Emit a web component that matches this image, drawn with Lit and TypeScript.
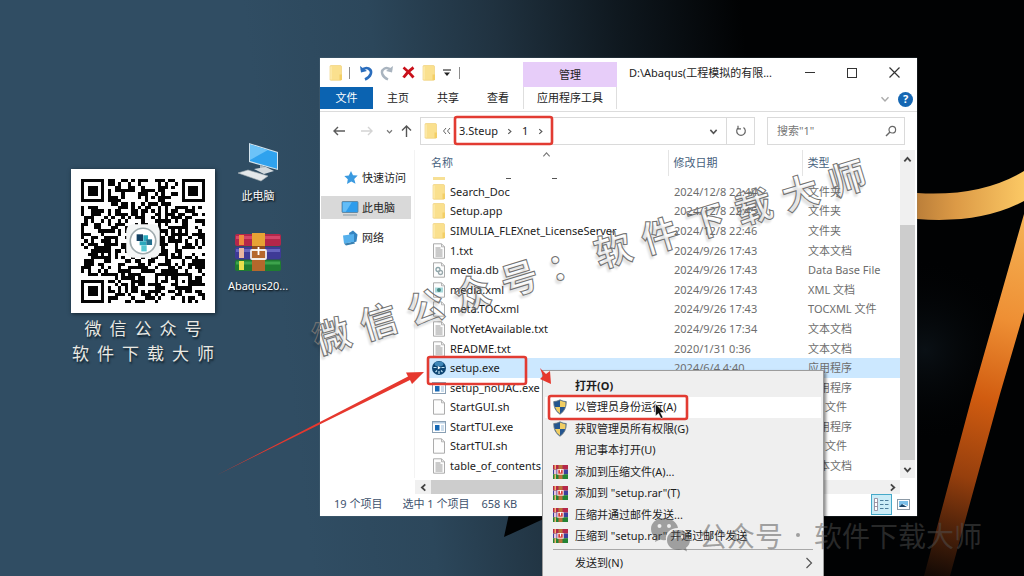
import { LitElement, html, svg, css } from "lit";
import { customElement } from "lit/decorators.js";
import { classMap } from "lit/directives/class-map.js";

const folder = html`<svg class="ic" width="14" height="16" viewBox="0 0 14 16">
  <path d="M1 1.500q0-1 1-1h9q1.500 0 1.500 1v13q0 .8-1 .8H2q-1 0-1-.8z" fill="#fae08e" stroke="#efcd70" stroke-width=".6" />
  <path d="M10.500 9.500h2.500v5.500h-2.500z" fill="#f3cf66" /><path d="M2 1.500v13" stroke="#fdedb5" stroke-width="1.200" />
</svg>`;

const sheet = (inner: unknown) => html`<svg class="ic" width="14" height="16" viewBox="0 0 14 16">
  <path d="M1.500.8h8l3 3v11.400h-11z" fill="#fdfdfd" stroke="#a3a3a3" stroke-width=".9" />
  <path d="M9.500.8v3h3" fill="none" stroke="#a3a3a3" stroke-width=".8" />${inner}
</svg>`;

const textFile = sheet(svg`<path d="M3.500 5h5M3.500 7h7M3.500 9h7M3.500 11h7M3.500 13h7" stroke="#8d8d8d" stroke-width=".9" />`);
const plainFile = sheet(svg``);
const dbFile = sheet(svg`<circle cx="6" cy="7.500" r="2" fill="none" stroke="#8aa3a8" stroke-width="1.300" /><circle cx="8.500" cy="10.500" r="2" fill="none" stroke="#9aa9ad" stroke-width="1.300" />`);
const xmlFile = sheet(svg`<path d="M3 5.500h8v5H3z" fill="#a8d9dc" /><circle cx="7" cy="8" r="2" fill="#4a8a83" />`);
const exeFile = html`<svg class="ic" width="14" height="16" viewBox="0 0 14 16">
  <rect x=".5" y="2.500" width="13" height="11" fill="#fff" stroke="#8aa0b4" /><path d="M1 3h12v1.500H1z" fill="#b9cfe3" />
  <rect x="3" y="6" width="4.500" height="5.500" fill="#1769b5" /><path d="M9 7h3M9 9h3M9 11h3" stroke="#8fb4d6" stroke-width=".9" />
</svg>`;
const setupIcon = html`<svg class="ic" width="14" height="16" viewBox="0 0 14 16">
  <circle cx="7" cy="8" r="7" fill="#0d4472" /><ellipse cx="7" cy="4" rx="4.500" ry="2.400" fill="#3f86b8" />
  <path d="M1.500 7.500h3M9.500 7.500h3M7 11v3M3.500 12l1.500-1.500M10.500 12L9 10.500" stroke="#bfe4f7" stroke-width="1.200" /><path d="M5.800 6l3 1.700-3 1.700z" fill="#fff" />
</svg>`;
const shield = html`<svg class="ic" width="14" height="16" viewBox="0 0 14 16">
  <path d="M7 .8Q10 2.500 13.300 2.600 13.500 11 7 15.300.5 11 .7 2.600 4 2.500 7 .8z" fill="#24558f" stroke="#6d7a80" stroke-width=".8" />
  <path d="M7 1.600Q10 3 12.600 3.200q.1 2.600-.6 4.800H7zM7 8v6.500Q3.200 12 2 8z" fill="#f0cd62" />
</svg>`;
const rarSmall = html`<svg class="ic" width="15" height="14" viewBox="0 0 15 14">
  <path d="M0 0h15v4.600H0z" fill="#b5284a" /><path d="M0 4.600h15v4.600H0z" fill="#3b3f9c" /><path d="M0 9.200h15V14H0z" fill="#238335" />
  <path d="M1.500 0h1.500v4.600H1.500zM1.500 9.200h1.500V14H1.500z" fill="#f2b36b" /><path d="M1 5h2.500v4H1z" fill="#e9c4dc" />
  <path d="M5.500 0h4v14h-4z" fill="#b9723a" /><rect x="4.800" y="4.600" width="5.400" height="4.600" fill="#d93b3b" stroke="#fbe9e2" /><path d="M7.500 4v3.500" stroke="#fff" />
</svg>`;
const monitorPath = svg`<rect x="1" y="1.500" width="16" height="11" rx=".8" fill="#2d9cec" stroke="#5d7d94" stroke-width=".8" /><path d="M1.800 2.300h9l-6 9.500h-3z" fill="#63bdf7" /><path d="M2 15h14" stroke="#97a5ae" stroke-width="1.200" />`;

const chevron = (d: string, size = 10, color = "#555", width = 1.4) => html`<svg class="ic" width=${size} height=${size} viewBox="0 0 10 10">
  <path d=${d} fill="none" stroke=${color} stroke-width=${width} />
</svg>`;
const UP = "M1.500 7L5 3.200 8.500 7";
const DOWN = "M1.500 3.200L5 7 8.500 3.200";
const LEFT = "M7 1.500L3.200 5 7 8.500";
const RIGHT = "M3.200 1.500L7 5 3.200 8.500";

interface Row { icon: unknown; name: string; date: string; type: string; selected?: boolean }
const rows: Row[] = [
  { icon: folder, name: "Search_Doc", date: "2024/12/8 22:44", type: "文件夹" },
  { icon: folder, name: "Setup.app", date: "2024/12/8 22:45", type: "文件夹" },
  { icon: folder, name: "SIMULIA_FLEXnet_LicenseServer", date: "2024/12/8 22:46", type: "文件夹" },
  { icon: textFile, name: "1.txt", date: "2024/9/26 17:43", type: "文本文档" },
  { icon: dbFile, name: "media.db", date: "2024/9/26 17:43", type: "Data Base File" },
  { icon: xmlFile, name: "media.xml", date: "2024/9/26 17:43", type: "XML 文档" },
  { icon: plainFile, name: "meta.TOCxml", date: "2024/9/26 17:43", type: "TOCXML 文件" },
  { icon: textFile, name: "NotYetAvailable.txt", date: "2024/9/26 17:34", type: "文本文档" },
  { icon: textFile, name: "README.txt", date: "2020/1/31 0:36", type: "文本文档" },
  { icon: setupIcon, name: "setup.exe", date: "2024/6/4 4:40", type: "应用程序", selected: true },
  { icon: exeFile, name: "setup_noUAC.exe", date: "", type: "应用程序" },
  { icon: plainFile, name: "StartGUI.sh", date: "", type: "SH 文件" },
  { icon: exeFile, name: "StartTUI.exe", date: "", type: "应用程序" },
  { icon: plainFile, name: "StartTUI.sh", date: "", type: "SH 文件" },
  { icon: textFile, name: "table_of_contents", date: "", type: "文本文档" },
];

const menuItems = [
  { icon: null, label: "打开(O)", kind: "bold" },
  { icon: shield, label: "以管理员身份运行(A)", kind: "hover" },
  { icon: shield, label: "获取管理员所有权限(G)", kind: "" },
  { icon: null, label: "用记事本打开(U)", kind: "" },
  { icon: rarSmall, label: "添加到压缩文件(A)...", kind: "" },
  { icon: rarSmall, label: '添加到 "setup.rar"(T)', kind: "" },
  { icon: rarSmall, label: "压缩并通过邮件发送...", kind: "" },
  { icon: rarSmall, label: '压缩到 "setup.rar" 并通过邮件发送', kind: "" },
];

const QR_SIZE = 37;

/** Dark modules of the code as one path: finders, alignment mark and data cells. */
function qrPath(): string {
  let seed = 20241;
  const rand = () => (seed = (seed * 1103515245 + 12345) % 2147483648) / 2147483648;
  const ring = (x: number, y: number, cx: number, cy: number) => Math.max(Math.abs(x - cx), Math.abs(y - cy));
  let d = "";
  for (let y = 0; y < QR_SIZE; y++) {
    for (let x = 0; x < QR_SIZE; x++) {
      let on = rand() < 0.53;
      for (const [cx, cy] of [[3, 3], [33, 3], [3, 33]]) {
        const r = ring(x, y, cx, cy);
        if (r <= 4) on = r !== 4 && r !== 2;
      }
      const a = ring(x, y, 30, 30);
      if (a <= 2) on = a !== 1;
      if (ring(x, y, 18, 18) <= 4) on = false;
      if (on) d += `M${x} ${y}h1v1h-1z`;
    }
  }
  return d;
}

@customElement("desktop-backdrop")
export class DesktopBackdrop extends LitElement {
  static styles = css`
    :host { display: block; }
    .art { display: block; width: 100%; height: 100%; }
  `;
  render() {
    return html`<svg class="art" viewBox="0 0 1024 576" preserveAspectRatio="none" aria-hidden="true">
      <defs>
        <linearGradient id="sky" gradientUnits="userSpaceOnUse" x1="250" y1="60" x2="740" y2="0">
          <stop offset="0" stop-color="#304d63" /><stop offset=".25" stop-color="#2c475b" /><stop offset=".5" stop-color="#203240" />
          <stop offset=".75" stop-color="#0f181f" /><stop offset="1" stop-color="#010203" />
        </linearGradient>
        <linearGradient id="blade" gradientUnits="userSpaceOnUse" x1="1040" y1="222" x2="935" y2="576">
          <stop offset="0" stop-color="#f5b254" /><stop offset=".28" stop-color="#ee8f34" />
          <stop offset=".5" stop-color="#d15c10" /><stop offset=".72" stop-color="#963f0d" /><stop offset=".87" stop-color="#4c210a" /><stop offset="1" stop-color="#140a05" />
        </linearGradient>
        <linearGradient id="arc" x1="0" x2="1" y1="0" y2="0">
          <stop offset="0" stop-color="#ad7334" /><stop offset=".45" stop-color="#dc9a46" /><stop offset="1" stop-color="#fbc864" />
        </linearGradient>
        <radialGradient id="glow" gradientUnits="userSpaceOnUse" cx="925" cy="350" r="90">
          <stop offset="0" stop-color="#0a1015" /><stop offset="1" stop-color="#020304" stop-opacity="0" />
        </radialGradient>
      </defs>
      <rect width="1024" height="576" fill="url(#sky)" />
      <path d="M512 500l-8 37 46-21v60h474V58H640z" fill="#010203" />
      <rect x="830" y="250" width="194" height="200" fill="url(#glow)" />
      <path d="M900 193h17q64 4 107-22v30q-43 23-107 18h-17z" fill="url(#arc)" />
      <path d="M1024 214v98l-24 82-50 182h-26l47-176z" fill="url(#blade)" />
    </svg>`;
  }
}

@customElement("promo-card")
export class PromoCard extends LitElement {
  static styles = css`
    :host { display: flex; flex-direction: column; align-items: center; font-family: "Noto Sans CJK SC", sans-serif; }
    .code { display: block; box-sizing: border-box; width: 144px; height: 144px; padding: 10px; background: #fff; box-shadow: 1px 1px 4px #14242f; }
    .caption { display: flex; gap: 8px; margin: 0; font-size: 17px; line-height: 25px; color: #e9e9e4; text-shadow: 1px 2px 2px #10202b; white-space: nowrap; }
    .first { margin-top: 2px; }
  `;
  render() {
    return html`
      <svg class="code" viewBox="0 0 37 37" role="img" aria-label="微信公众号">
        <path d=${qrPath()} fill="#050505" shape-rendering="crispEdges" />
        <rect x="13.500" y="13.500" width="10" height="10" rx="2" fill="#f3f5f5" />
        <circle cx="18.500" cy="18.500" r="3.800" fill="#fff" stroke="#9fabae" stroke-width=".5" />
        <path d="M16.600 16.500h1.900v2h-1.900z" fill="#113f62" /><path d="M18.600 16.800h1.400v1.700h-1.400zM17.500 18.600h2v1.200h-2z" fill="#2aa7bc" />
        <path d="M19.500 18h1.700v1.700h-1.700z" fill="#226f8e" /><path d="M18 19.800h1.600v1.800H18z" fill="#57c8d2" />
      </svg>
      <p class="caption first">${[..."微信公众号"].map((c) => html`<span>${c}</span>`)}</p>
      <p class="caption">${[..."软件下载大师"].map((c) => html`<span>${c}</span>`)}</p>
    `;
  }
}

@customElement("explorer-window")
export class ExplorerWindow extends LitElement {
  static styles = css`
    :host { display: flex; flex-direction: column; background: #fff; color: #222; font: 11px/16px "Noto Sans", "Noto Sans CJK SC", sans-serif; box-shadow: 0 0 1px #6c8290; }
    button, input { font: inherit; color: inherit; border: 0; padding: 0; margin: 0; background: none; min-width: 0; }
    button { display: flex; align-items: center; justify-content: center; white-space: nowrap; }
    .ic { flex: none; display: block; }
    .title-bar { display: flex; height: 29px; }
    .quick { display: flex; align-items: center; box-sizing: border-box; width: 203px; padding-left: 9px; }
    .quick button { width: 14px; height: 16px; }
    .bar { width: 1px; height: 12px; background: #8c8c8c; }
    .gap-s { margin: 0 9px 0 6px; }
    .gap-m { margin-left: 7px; }
    .gap-t { margin-left: 4px; }
    .bar.end { margin-left: 5px; }
    .context { box-sizing: border-box; width: 94px; margin-top: 4px; background: #e7cdf9; text-align: center; line-height: 25px; }
    .caption { flex: 1; min-width: 0; padding-left: 12px; line-height: 29px; white-space: nowrap; }
    .controls { display: flex; padding-right: 2px; }
    .controls button { width: 42px; }
    .ribbon { display: flex; height: 24px; border-bottom: 1px solid #dcdcdc; }
    .tab { width: 50px; height: 22px; }
    .file { width: 53px; background: #0b63b1; color: #fff; }
    .tools { width: 94px; box-sizing: border-box; border: solid #dedede; border-width: 0 1px; }
    .spacer { flex: 1; }
    .ribbon-end { display: flex; align-items: center; gap: 8px; padding: 0 4px 0 0; }
    .help { width: 15px; height: 15px; border-radius: 8px; background: #1567b3; color: #fff; font-weight: 700; }
    .address-row { display: flex; align-items: center; height: 38px; padding: 0 12px 0 0; }
    .history { display: flex; align-items: center; width: 100px; }
    .history button { height: 20px; width: 28px; }
    .history .narrow { width: 17px; }
    .history .first { margin-left: 5px; }
    .path { flex: 1; display: flex; align-items: center; box-sizing: border-box; height: 28px; border: 1px solid #dadada; padding-left: 3px; }
    .crumb { margin: 0 8px 0 5px; }
    .crumb-last { margin: 0 9px; }
    .path .refresh { width: 28px; height: 26px; border-left: 1px solid #dadada; }
    .path .open { width: 26px; height: 26px; }
    .search { display: flex; align-items: center; box-sizing: border-box; width: 138px; height: 28px; margin-left: 12px; padding: 0 7px 0 9px; border: 1px solid #dadada; }
    .search input { flex: 1; outline: 0; }
    .search input::placeholder { color: #777; opacity: 1; }
    .body { flex: 1; display: flex; min-height: 0; }
    .nav { display: flex; flex-direction: column; gap: 7px; box-sizing: border-box; width: 94px; padding: 16px 3px 0 1px; }
    .nav a { display: flex; align-items: center; gap: 3px; height: 23px; padding-left: 20px; color: #1d1d1d; text-decoration: none; white-space: nowrap; }
    .nav .current { background: #d9d9d9; }
    .files { flex: 1; min-width: 0; display: flex; flex-direction: column; }
    .upper { flex: 1; min-height: 0; display: flex; border-left: 1px solid #f3f3f3; }
    .list { flex: 1; min-width: 0; padding: 0 0 2px 12px; overflow: hidden; }
    .table { width: 100%; height: 100%; border-collapse: collapse; table-layout: fixed; }
    .col-date { width: 134px; }
    .col-type { width: 98px; }
    .table th { height: 26px; padding: 0 4px; font-weight: 400; text-align: left; color: #45607c; vertical-align: middle; position: relative; }
    .table th.split { padding-left: 5px; border-left: 1px solid #e4e4e4; }
    .sort { position: absolute; left: 48%; top: 0; }
    .table td { padding: 0 6px; color: #6d6d6d; white-space: nowrap; overflow: hidden; }
    .table td.name-cell { padding: 0 0 0 5px; color: #1c1c1c; }
    .name { display: flex; align-items: center; gap: 4px; height: 16px; }
    .table .selected { background: #cce8ff; }
    .table td.cut { padding: 0 0 0 6px; }
    .sliver { display: flex; gap: 41px; height: 5px; }
    .sliver-folder { width: 12px; height: 3px; margin-right: 20px; background: #f7e095; }
    .sliver-mark { width: 5px; height: 1px; margin-top: 1px; background: #555; }
    .vscroll { display: flex; flex-direction: column; align-items: center; width: 15px; margin-right: 2px; background: #f0f0f0; }
    .vscroll button { width: 15px; height: 18px; }
    .vthumb { align-self: stretch; flex: 1; margin-top: 57px; background: #cdcdcd; }
    .hscroll { display: flex; align-items: center; height: 14px; margin: 2px 17px 0 1px; background: #f0f0f0; }
    .hscroll button { width: 16px; height: 14px; }
    .hthumb { width: 320px; height: 14px; margin-right: auto; background: #cdcdcd; }
    .status { display: flex; align-items: center; height: 22px; padding: 0 6px 2px 14px; box-sizing: border-box; color: #3d526d; white-space: nowrap; }
    .status span { margin-right: 20px; }
    .status .tight { margin-right: 12px; }
    .view { box-sizing: border-box; width: 21px; height: 21px; margin-left: auto; background: #cbecf7; border: 1px solid #45a9c9; }
    .status .icons { width: 16px; margin-left: 3px; }
  `;

  render() {
    return html`
      <header class="title-bar">
        <div class="quick">
          ${folder}<i class="bar gap-s"></i>
          <button aria-label="撤消"><svg class="ic" width="14" height="16" viewBox="0 0 14 16"><path d="M1 1l1 6.500 6-1.500z" fill="#2a6dbd" /><path d="M2.500 5.500Q6 2 9.500 3.500q3.500 2 2.200 5.500Q10.500 12.500 6 14.500" fill="none" stroke="#2a6dbd" stroke-width="2.600" /></svg></button>
          <i class="gap-m"></i><button aria-label="恢复"><svg class="ic" width="14" height="16" viewBox="0 0 14 16"><path d="M13 1l-1 6.500L6 6z" fill="#a9b4bf" /><path d="M11.500 5.500Q8 2 4.500 3.500 1 5.500 2.300 9 3.500 12.500 8 14.500" fill="none" stroke="#a9b4bf" stroke-width="2.400" /></svg></button>
          <i class="gap-m"></i><button aria-label="删除"><svg class="ic" width="13" height="13" viewBox="0 0 13 13"><path d="M1.500 1.500Q6 5 11.500 11.500M11.500 1.500Q5 6 1.500 11.500" fill="none" stroke="#c9101a" stroke-width="2.800" /></svg></button>
          <i class="gap-m"></i>${folder}
          <i class="gap-t"></i><button aria-label="自定义"><svg class="ic" width="8" height="8" viewBox="0 0 8 8"><path d="M0 1h8" stroke="#333" stroke-width="1.200" /><path d="M1 3.500h6L4 7z" fill="#222" /></svg></button>
          <i class="bar end"></i>
        </div>
        <div class="context">管理</div>
        <div class="caption">D:\\Abaqus(工程模拟的有限...</div>
        <div class="controls">
          <button aria-label="最小化"><svg class="ic" width="10" height="10" viewBox="0 0 10 10"><path d="M0 4.500h10" stroke="#333" /></svg></button>
          <button aria-label="最大化"><svg class="ic" width="10" height="10" viewBox="0 0 10 10"><rect x=".5" y=".5" width="9" height="9" fill="none" stroke="#333" /></svg></button>
          <button aria-label="关闭"><svg class="ic" width="11" height="11" viewBox="0 0 11 11"><path d="M.5.5l10 10M10.500.5l-10 10" stroke="#333" stroke-width="1.200" /></svg></button>
        </div>
      </header>
      <div class="ribbon">
        <button class="tab file">文件</button><button class="tab">主页</button><button class="tab">共享</button><button class="tab">查看</button>
        <button class="tab tools">应用程序工具</button>
        <span class="spacer"></span>
        <div class="ribbon-end"><button aria-label="展开功能区">${chevron(DOWN, 10, "#aaa")}</button><button class="help">?</button></div>
      </div>
      <div class="address-row">
        <div class="history">
          <button class="first" aria-label="返回"><svg class="ic" width="12" height="10" viewBox="0 0 12 10"><path d="M12 5H1M5 1L1 5l4 4" fill="none" stroke="#5c5c5c" stroke-width="1.400" /></svg></button>
          <button aria-label="前进"><svg class="ic" width="12" height="10" viewBox="0 0 12 10"><path d="M0 5h11M7 1l4 4-4 4" fill="none" stroke="#d4d4d4" stroke-width="1.400" /></svg></button>
          <button class="narrow" aria-label="最近位置">${chevron(DOWN, 7, "#777", 1.8)}</button>
          <button class="narrow" aria-label="向上"><svg class="ic" width="11" height="12" viewBox="0 0 11 12"><path d="M5.500 12V1M1 5.500L5.500 1 10 5.500" fill="none" stroke="#555" stroke-width="1.400" /></svg></button>
        </div>
        <div class="path">
          ${folder}
          <svg class="ic" width="16" height="8" viewBox="0 0 16 8"><path d="M8 1L5.500 4 8 7M12 1L9.500 4 12 7" fill="none" stroke="#666" /></svg>
          <button class="crumb">3.Steup</button>${chevron(RIGHT, 7, "#555", 1.6)}
          <button class="crumb-last">1</button>${chevron(RIGHT, 7, "#555", 1.6)}
          <span class="spacer"></span>
          <button class="open" aria-label="以前的位置">${chevron(DOWN, 9, "#555", 1.7)}</button>
          <button class="refresh" aria-label="刷新"><svg class="ic" width="12" height="12" viewBox="0 0 12 12"><path d="M3.500 2.500a4.300 4.300 0 1 0 5 0M3 .8v3h3" fill="none" stroke="#666" stroke-width="1.200" /></svg></button>
        </div>
        <label class="search">
          <input type="text" aria-label="搜索" placeholder='搜索"1"' />
          <svg class="ic" width="12" height="12" viewBox="0 0 12 12"><circle cx="7.300" cy="4.700" r="3.300" fill="none" stroke="#666" stroke-width="1.200" /><path d="M5 7L1 11" stroke="#666" stroke-width="1.500" /></svg>
        </label>
      </div>
      <div class="body">
        <nav class="nav">
          <a href="#quick"><svg class="ic" width="18" height="16" viewBox="0 0 18 16"><path d="M10 1l2 4.300 4.700.3-3.500 3.300 1.300 4.800-4.200-2.300L6 14l.8-4.800L3.300 6l4.500-.6z" fill="#3a9ae0" /></svg>快速访问</a>
          <a class="current" href="#pc"><svg class="ic" width="18" height="16" viewBox="0 0 18 16">${monitorPath}</svg>此电脑</a>
          <a href="#network"><svg class="ic" width="18" height="16" viewBox="0 0 18 16"><path d="M8 3l4-2.500 4.500 4-1 7-5.500 2z" fill="#3584c0" /><path d="M2 5.500l11-1.500v8L3 13.500z" fill="#55b0ec" /><path d="M3 13.500L13 12l1 1.500-9 2z" fill="#387faf" /></svg>网络</a>
        </nav>
        <div class="files">
          <div class="upper">
            <div class="list">
              <table class="table">
                <colgroup><col /><col class="col-date" /><col class="col-type" /></colgroup>
                <thead><tr>
                  <th>名称<span class="sort">${chevron(UP, 9, "#777", 1.2)}</span></th><th class="split">修改日期</th><th class="split">类型</th>
                </tr></thead>
                <tbody>
                  <tr><td class="cut" colspan="3"><div class="sliver"><i class="sliver-folder"></i><i class="sliver-mark"></i><i class="sliver-mark"></i></div></td></tr>
                  ${rows.map((r) => html`<tr class=${classMap({ selected: !!r.selected })}>
                    <td class="name-cell"><div class="name">${r.icon}<span>${r.name}</span></div></td><td>${r.date}</td><td>${r.type}</td>
                  </tr>`)}
                </tbody>
              </table>
            </div>
            <div class="vscroll"><button aria-label="向上滚动">${chevron(UP, 9, "#444", 2)}</button><i class="vthumb"></i><button aria-label="向下滚动">${chevron(DOWN, 9, "#444", 2)}</button></div>
          </div>
          <div class="hscroll"><button aria-label="向左滚动">${chevron(LEFT, 9, "#444", 2)}</button><i class="hthumb"></i><button aria-label="向右滚动">${chevron(RIGHT, 9, "#444", 2)}</button></div>
        </div>
      </div>
      <footer class="status">
        <span>19 个项目</span><span class="tight">选中 1 个项目</span><span>658 KB</span>
        <button class="view" aria-label="详细信息"><svg class="ic" width="15" height="13" viewBox="0 0 15 13"><path d="M.5.5h3v12h-3zM.5 4.500h3M.5 8.500h3" fill="#fff" stroke="#8a7f93" stroke-width=".8" /><path d="M6 2.500h3.500M11 2.500h3.500M6 6.500h3.500M11 6.500h3.500M6 10.500h3.500M11 10.500h3.500" stroke="#4c7c9a" /></svg></button>
        <button class="icons" aria-label="大图标"><svg class="ic" width="13" height="11" viewBox="0 0 13 11"><rect x=".5" y=".5" width="12" height="10" fill="#fff" stroke="#8c9aa6" /><path d="M2 2h9v5L6 5 2 8z" fill="#7cc0ea" /><path d="M2 8l3-3 5 3z" fill="#1b4569" /></svg></button>
      </footer>
    `;
  }
}

@customElement("context-menu")
export class ContextMenu extends LitElement {
  static styles = css`
    :host { display: block; box-sizing: border-box; overflow: hidden; background: #efefef; border: 1px solid #9c9c9c; border-bottom: 0; padding: 4px 2px 0; font: 11px/16px "Noto Sans", "Noto Sans CJK SC", sans-serif; box-shadow: 2px 2px 3px #0007; }
    .items { display: grid; grid-template-rows: repeat(8, 1fr); height: 172px; }
    .item { display: flex; align-items: center; width: 100%; min-height: 0; border: 0; padding: 0; background: none; font: inherit; color: #1d1d1d; text-align: left; white-space: nowrap; }
    .slot { display: flex; justify-content: center; width: 30px; }
    .bold { font-weight: 700; }
    .hover { background: #fff; }
    .line { height: 0; margin: 2px 8px; border: 0; border-top: 1px solid #a8a8a8; }
    .send { height: 22px; }
    .more { margin: 0 8px 0 auto; }
  `;
  render() {
    return html`
      <div class="items">
        ${menuItems.map((m) => html`<button class=${classMap({ item: true, bold: m.kind === "bold", hover: m.kind === "hover" })}><span class="slot">${m.icon}</span>${m.label}</button>`)}
      </div>
      <hr class="line" />
      <button class="item send"><span class="slot"></span>发送到(N)<svg class="more" width="8" height="12" viewBox="0 0 8 12"><path d="M1.500 1l5 5-5 5" fill="none" stroke="#555" stroke-width="1.200" /></svg></button>
    `;
  }
}

@customElement("app-root")
export class AppRoot extends LitElement {
  static styles = css`
    :host { display: block; position: relative; height: 100vh; overflow: hidden; font: 11px/16px "Noto Sans", "Noto Sans CJK SC", sans-serif; }
    .backdrop { position: absolute; inset: 0; }
    .promo { position: absolute; left: 71px; top: 169px; width: 144px; }
    .shortcuts { position: absolute; left: 222px; top: 142px; width: 72px; display: flex; flex-direction: column; gap: 28px; }
    .shortcut { display: flex; flex-direction: column; align-items: center; gap: 6px; color: #fff; text-decoration: none; text-shadow: 1px 1px 2px #000; }
    .explorer { position: absolute; left: 320px; right: 107px; top: 58px; bottom: 60px; }
    .menu { position: absolute; left: 542px; width: 282px; top: 370px; bottom: 0; }
    .marks { position: absolute; left: 0; top: 0; pointer-events: none; }
    .slant { position: absolute; left: 301px; top: 227px; display: flex; gap: 12px; font: 700 37px/56px "Noto Sans CJK SC", sans-serif; color: transparent; -webkit-text-stroke: 1px #727272; transform: rotate(-17deg); pointer-events: none; white-space: nowrap; text-shadow: -3px 3px 2px #0000001c; }
    .account { position: absolute; left: 650px; top: 515px; display: flex; align-items: center; gap: 8px; font: 28px/40px "Noto Sans CJK SC", sans-serif; color: #50505080; pointer-events: none; white-space: nowrap; }
    .dot { width: 4px; height: 4px; border-radius: 2px; margin: 0 6px 0 5px; background: currentColor; }
  `;
  render() {
    return html`
      <desktop-backdrop class="backdrop"></desktop-backdrop>
      <promo-card class="promo"></promo-card>
      <div class="shortcuts">
        <a class="shortcut" href="#pc">
          <svg width="42" height="40" viewBox="0 0 42 40">
            <path d="M12 1l29 9v18L12 20z" fill="#d4e4ee" /><path d="M13 2.500l27 8.200v16L13 19z" fill="#2fa2ee" /><path d="M13 2.500l18 5.500L13 18z" fill="#6cc3f8" />
            <path d="M23 23l6 2v4l-6-1z" fill="#a9b4ba" /><path d="M17 27l12-2 8 4-10 3z" fill="#d3dade" /><path d="M1 31l10-3 20 6-7 5z" fill="#e4e8ea" stroke="#a6b0b6" stroke-width=".6" />
          </svg>此电脑
        </a>
        <a class="shortcut" href="#archive">
          <svg width="46" height="40" viewBox="0 0 46 40">
            <rect x="0" y="2" width="46" height="12" rx="2" fill="#b3274a" /><path d="M1 4h44v3H1z" fill="#d3466a" /><path d="M4 3h5v10H4z" fill="#f08a3c" />
            <rect x="0" y="15" width="46" height="12" rx="2" fill="#3e3a96" /><path d="M1 17h44v3H1z" fill="#6563bd" /><path d="M4 16h5v10H4z" fill="#e9b6a0" />
            <rect x="0" y="28" width="46" height="11" rx="2" fill="#1f7c31" /><path d="M1 29.500h44v3H1z" fill="#3da34c" /><path d="M4 29h5v9H4z" fill="#e9e04c" />
            <path d="M17 1h13v13H17z" fill="#e7a334" /><path d="M17 15h13v24H17z" fill="#b5682c" /><path d="M17 14h13v4H17z" fill="#8f4d1e" />
            <rect x="16" y="18" width="15" height="9" rx="1" fill="none" stroke="#f3eee8" stroke-width="1.800" /><path d="M23.500 15v8" stroke="#fff" stroke-width="1.800" />
          </svg>Abaqus20...
        </a>
      </div>
      <explorer-window class="explorer"></explorer-window>
      <div class="slant">${[..."微信公众号：软件下载大师"].map((c) => html`<span>${c}</span>`)}</div>
      <context-menu class="menu"></context-menu>
      <div class="account">
        <svg width="41" height="36" viewBox="0 0 41 36"><g fill="currentColor">
          <path fill-rule="evenodd" d="M14 1C6 1 1 6 1 12c0 4 2 7 5 9l-1 4 5-2.500q3 1 6 .5C15 16 20 11 28 11 27 5 21 1 14 1zM9.500 7a2 2 0 1 1 0 4 2 2 0 0 1 0-4zM19 7a2 2 0 1 1 0 4 2 2 0 0 1 0-4z" />
          <path fill-rule="evenodd" d="M28.500 13C21 13 17 18 17 23c0 6 5 10 11.500 10q2.500 0 4.500-.8l4 2.300-1-3.700c2.500-2 4-4.500 4-7.800 0-5-5-10-11.500-10zM25 18a1.700 1.700 0 1 1 0 3.400 1.700 1.700 0 0 1 0-3.400zM32.500 18a1.700 1.700 0 1 1 0 3.400 1.700 1.700 0 0 1 0-3.400z" />
        </g></svg>
        <span>公众号</span><i class="dot"></i><span>软件下载大师</span>
      </div>
      <svg class="marks" width="1024" height="576" viewBox="0 0 1024 576" aria-hidden="true">
        <g fill="none" stroke="#e23b32" stroke-width="2.600">
          <rect x="455" y="117" width="97" height="27" rx="2" /><rect x="428" y="357" width="98" height="27" rx="2" /><rect x="549" y="396" width="138" height="23" rx="2" />
        </g>
        <g fill="#e6382e">
          <path d="M217 475L408 376.500l-2-4L424 372l-12 12-2-4z" /><path d="M540 368l6 6 4-3 1 13-11-5 3-3z" />
        </g>
        <path d="M655.500 404v12l3-2.500 2.500 5 2-1-2.500-5h4z" fill="#111" stroke="#fff" stroke-width=".5" />
      </svg>
    `;
  }
}
